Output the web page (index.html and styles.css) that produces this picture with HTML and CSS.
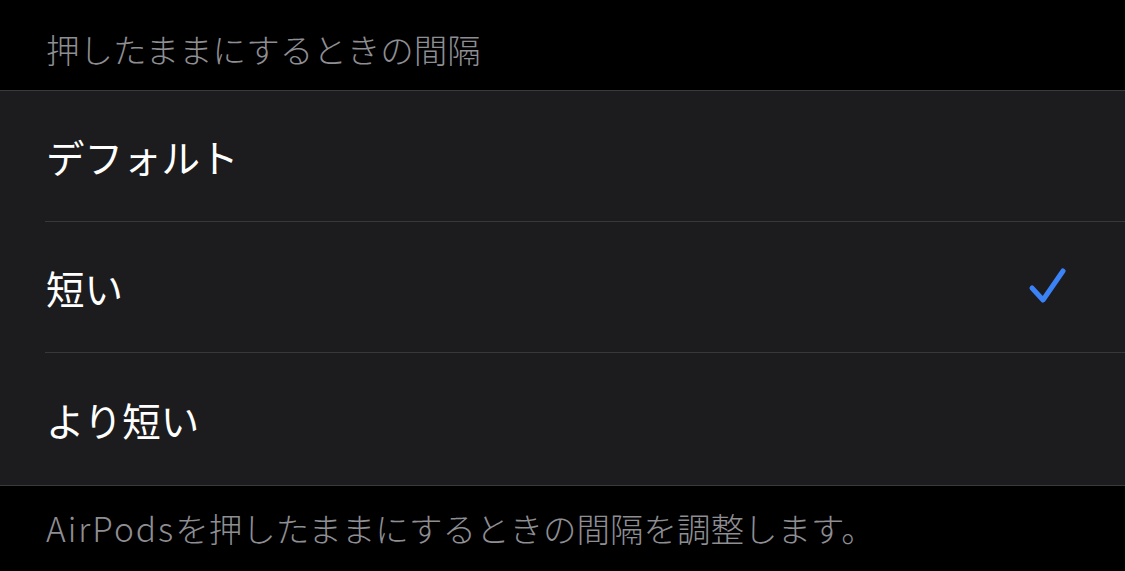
FILE: index.html
```html
<!DOCTYPE html>
<html lang="ja">

<head>
  <meta charset="UTF-8">
  <meta name="viewport" content="width=device-width, initial-scale=1.0">
  <title>押したままにするときの間隔</title>
  <link rel="stylesheet" href="styles.css">
</head>

<body>

  <div class="section-header">押したままにするときの間隔</div>

  <ul class="option-list">
    <li class="option">デフォルト</li>
    <li class="option selected">
      短い
      <svg class="check" width="44" height="44" viewBox="0 0 44 44" xmlns="http://www.w3.org/2000/svg" fill="none">
        <path stroke="#3b82f6" stroke-width="5" stroke-linecap="round" stroke-linejoin="round" d="M5 21l11 12L36 4" />
      </svg>
    </li>
    <li class="option">より短い</li>
  </ul>

  <div class="section-footer"><span class="latin">AirPods</span>を押したままにするときの間隔を調整します。</div>

</body>

</html>
```

FILE: styles.css
```css
* {
  box-sizing: border-box;
  margin: 0;
  padding: 0;
}

body {
  font-family: 'Noto Sans CJK JP', 'Noto Sans', sans-serif;
  background-color: #000;
  color: #fff;
  width: 1125px;
  height: 571px;
  overflow: hidden;
}

.section-header {
  height: 90px;
  padding: 6px 46px 0;
  display: flex;
  align-items: center;
  font-size: 33.5px;
  font-weight: 300;
  color: #8e8e93;
}

.option-list {
  list-style: none;
  background-color: #1c1c1e;
  border-top: 1px solid #3a3a3c;
  border-bottom: 1px solid #3a3a3c;
  padding-left: 45px;
}

.option {
  height: 131px;
  display: flex;
  align-items: center;
  justify-content: space-between;
  padding-left: 1px;
  padding-right: 54px;
  font-size: 38.5px;
  border-bottom: 1px solid #38383a;
}

.option:last-child {
  height: 132px;
  border-bottom: none;
}

.check {
  margin-top: 4px;
}

.section-footer {
  height: 85px;
  padding: 0 46px 2px;
  display: flex;
  align-items: center;
  font-size: 33.5px;
  font-weight: 300;
  color: #8e8e93;
}

.latin {
  letter-spacing: 2px;
}
```
